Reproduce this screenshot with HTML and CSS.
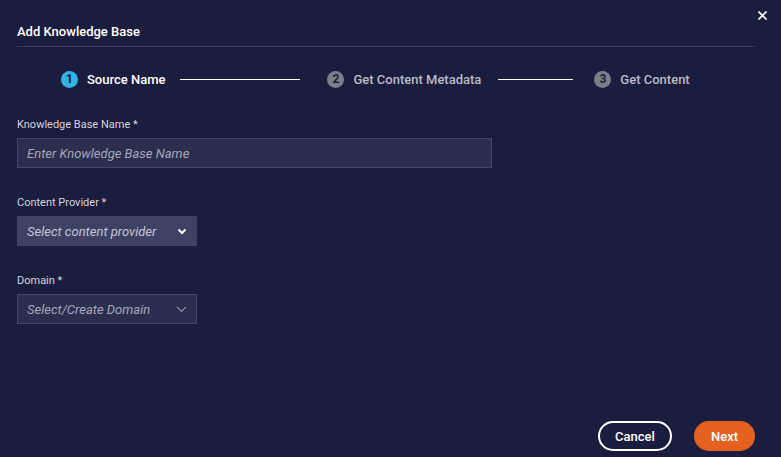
FILE: index.html
```html
<!DOCTYPE html>
<html>
<head>
<meta charset="utf-8">
<link rel="stylesheet" href="styles.css">
</head>
<body>
<div class="modal">
  <button class="close" aria-label="Close">
    <svg width="9" height="9" viewBox="0 0 9 9"><path d="M1 1L8 8M8 1L1 8" stroke="#fff" stroke-width="1.6" stroke-linecap="square"/></svg>
  </button>
  <div class="header">Add Knowledge Base</div>
  <div class="stepper">
    <span class="step-num active">1</span><span class="step-label">Source Name</span>
    <span class="step-line line1"></span>
    <span class="step-num">2</span><span class="step-label muted">Get Content Metadata</span>
    <span class="step-line line2"></span>
    <span class="step-num">3</span><span class="step-label muted">Get Content</span>
  </div>
  <div class="form">
    <div class="field">
      <label class="label">Knowledge Base Name *</label>
      <div class="input wide"><span class="placeholder">Enter Knowledge Base Name</span></div>
    </div>
    <div class="field">
      <label class="label">Content Provider *</label>
      <div class="input select filled"><span class="placeholder light">Select content provider</span>
        <svg class="chev" width="10" height="7" viewBox="0 0 10 7"><path d="M1.5 1.5L5 5L8.5 1.5" fill="none" stroke="#fff" stroke-width="2"/></svg>
      </div>
    </div>
    <div class="field">
      <label class="label">Domain *</label>
      <div class="input select"><span class="placeholder">Select/Create Domain</span>
        <svg class="chev" width="11" height="7" viewBox="0 0 11 7"><path d="M1 1L5.5 5.5L10 1" fill="none" stroke="#8e90a8" stroke-width="1.2"/></svg>
      </div>
    </div>
  </div>
  <div class="footer">
    <button class="btn cancel">Cancel</button>
    <button class="btn next">Next</button>
  </div>
</div>
</body>
</html>
```
FILE: styles.css
```css
html, body {
  margin: 0;
  padding: 0;
  height: 100%;
}
body {
  background: #1b1d3f;
  font-family: Roboto, "Liberation Sans", sans-serif;
  color: #ffffff;
}
.modal {
  position: relative;
  height: 100%;
  box-sizing: border-box;
  display: flex;
  flex-direction: column;
  padding: 0 26px 6px 17px;
}
.close {
  position: absolute;
  top: 10px;
  right: 13px;
  width: 11px;
  height: 11px;
  padding: 0;
  border: 0;
  background: transparent;
  display: flex;
  align-items: center;
  justify-content: center;
}
.header {
  padding-top: 24px;
  padding-bottom: 6px;
  line-height: 16px;
  font-size: 13px;
  font-weight: 500;
  color: #ffffff;
  border-bottom: 1px solid #3a3c5c;
}
.stepper {
  display: flex;
  align-items: center;
  margin-top: 23px;
  padding-left: 44px;
  height: 18px;
}
.step-num {
  width: 17px;
  height: 17px;
  border-radius: 50%;
  background: #7d7e8c;
  color: #1b1d3f;
  font-size: 12px;
  font-weight: 700;
  display: flex;
  align-items: center;
  justify-content: center;
  margin-right: 9px;
}
.step-num.active {
  background: #2fb2e6;
}
.step-label {
  font-size: 13px;
  font-weight: 500;
  color: #ffffff;
  white-space: nowrap;
}
.step-label.muted {
  color: #b9bac6;
}
.step-line {
  height: 1px;
  background: #ffffff;
}
.line1 {
  width: 120px;
  margin: 0 27px 0 15px;
}
.line2 {
  width: 75px;
  margin: 0 21px 0 17px;
}
.form {
  margin-top: 30px;
  display: flex;
  flex-direction: column;
  gap: 28px;
}
.field {
  display: flex;
  flex-direction: column;
}
.label {
  font-size: 11px;
  line-height: 14px;
  color: #d3d4de;
  margin-bottom: 6px;
}
.input {
  box-sizing: border-box;
  height: 30px;
  width: 180px;
  background: #2c2e50;
  border: 1px solid #444769;
  display: flex;
  align-items: center;
  padding-left: 9px;
  padding-right: 9px;
}
.input.wide {
  width: 475px;
}
.input.filled {
  background: #3f4164;
  border-color: #3f4164;
}
.select {
  justify-content: space-between;
}
.placeholder {
  font-size: 13px;
  font-style: italic;
  color: #a4a6ba;
  white-space: nowrap;
}
.placeholder.light {
  color: #c4c5d3;
}
.chev {
  display: block;
}
.footer {
  margin-top: auto;
  display: flex;
  justify-content: flex-end;
  gap: 22px;
}
.btn {
  height: 30px;
  border-radius: 15px;
  font-family: Roboto, "Liberation Sans", sans-serif;
  font-size: 13px;
  font-weight: 500;
  color: #ffffff;
  cursor: pointer;
}
.cancel {
  width: 74px;
  background: transparent;
  border: 2px solid #ffffff;
}
.next {
  width: 61px;
  background: #e5611f;
  border: 0;
}
```
